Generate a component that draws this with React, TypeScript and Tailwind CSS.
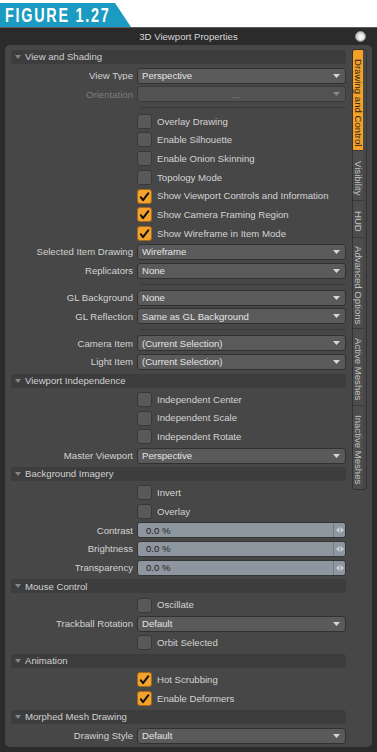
import type { ReactNode } from "react";

const Arrow = ({ dim }: { dim?: boolean }) => (
  <svg width="7" height="4" viewBox="0 0 7 4" className="shrink-0">
    <path d="M0 0 L7 0 L3.5 4 Z" fill={dim ? "#8a8a8a" : "#d8d8d8"} />
  </svg>
);

const Row = ({ label, dim, children }: { label?: string; dim?: boolean; children?: ReactNode }) => (
  <div className="flex h-[18.7px] items-center">
    <div className={`w-[122px] shrink-0 truncate text-right ${dim ? "text-[#7d7d7d]" : "text-[#d3d3d3]"}`}>{label}</div>
    <div className="ml-[4px] flex flex-1 items-center">{children}</div>
  </div>
);

const Dropdown = ({ value }: { value: string }) => (
  <div className="flex h-[16px] w-full items-center justify-between rounded-[3px] border border-[#313131] bg-[#5a5a5a] pl-[4px] pr-[5px] text-[#e4e4e4]">
    <span>{value}</span>
    <Arrow />
  </div>
);

const Check = ({ label, on }: { label: string; on?: boolean }) => (
  <Row>
    <div
      className={`flex h-[15px] w-[15px] items-center justify-center rounded-[3px] border ${
        on ? "border-[#a8681a] bg-[#f3a22c]" : "border-[#383838] bg-[#595959]"
      }`}
    >
      {on && (
        <svg width="11" height="11" viewBox="0 0 11 11">
          <path d="M1.8 6.2 L4 9.2 L9.4 2.2" fill="none" stroke="#111" strokeWidth="2" strokeLinecap="round" strokeLinejoin="round" />
        </svg>
      )}
    </div>
    <span className="ml-[5px] text-[#d3d3d3]">{label}</span>
  </Row>
);

const Slider = ({ label }: { label: string }) => (
  <Row label={label}>
    <div className="flex h-[16px] w-full items-center rounded-[3px] border border-[#343434] bg-[#8e979f] text-[#1d1d1d]">
      <span className="flex-1 pl-[8px]">0.0 %</span>
      <div className="flex h-full w-[12px] items-center justify-center border-l border-[#737b82]">
        <svg width="8" height="6" viewBox="0 0 8 6">
          <path d="M3.4 0 L0 3 L3.4 6 Z M4.6 0 L8 3 L4.6 6 Z" fill="#c9d0d6" />
        </svg>
      </div>
    </div>
  </Row>
);

const Header = ({ title }: { title: string }) => (
  <div className="flex h-[18.7px] items-center">
    <div className="flex h-[14px] w-full items-center rounded-[3px] bg-[#3d3d3d] pl-[4px] text-[#d0d0d0]">
      <svg width="6" height="4" viewBox="0 0 6 4">
        <path d="M0 0 L6 0 L3 4 Z" fill="#858585" />
      </svg>
      <span className="ml-[4px]">{title}</span>
    </div>
  </div>
);

const Sep = () => (
  <div className="flex h-[8.3px] items-center pl-[129px]">
    <div className="h-px w-full bg-[#3a3a3a]" />
  </div>
);

const tabs = [
  { name: "Drawing and Control", h: "h-[100px]", active: true },
  { name: "Visibility", h: "h-[50px]" },
  { name: "HUD", h: "h-[37px]" },
  { name: "Advanced Options", h: "h-[91px]" },
  { name: "Active Meshes", h: "h-[77px]" },
  { name: "Inactive Meshes", h: "h-[84px]" },
];

export default function App() {
  return (
    <div className="h-[752px] w-[377px] overflow-hidden bg-white font-['Liberation_Sans',Arial,sans-serif] text-[9.6px] leading-none">
      <div className="h-[27px] pt-[3px]">
        <div className="flex h-[24px] w-[131px] items-center bg-[#1b9bc1] pl-[5px] [clip-path:polygon(0_0,115px_0,131px_100%,0_100%)]">
          <span className="origin-left scale-x-[0.72] whitespace-nowrap text-[20px] font-bold tracking-[0.12em] text-white">
            FIGURE 1.27
          </span>
        </div>
      </div>

      <div className="flex h-[725px] flex-col border-t border-[#5c5c5c] bg-[#2b2b2b]">
        <div className="relative flex h-[17px] items-center justify-center text-[#d6d6d6]">
          3D Viewport Properties
          <div className="absolute right-[11px] top-[3px] flex h-[11px] w-[11px] items-center justify-center rounded-full border border-[#8d8d8d] bg-[#cfcfcf]">
            <div className="h-[6px] w-[6px] rounded-full bg-[#f2f2f2]" />
          </div>
        </div>

        <div className="mx-[5px] flex h-[702px] rounded-[5px] bg-[#474747]">
          <div className="flex-1 pl-[6px] pt-[2.6px]">
            <Header title="View and Shading" />
            <Row label="View Type">
              <Dropdown value="Perspective" />
            </Row>
            <Row label="Orientation" dim>
              <div className="flex h-[16px] w-full items-center rounded-[3px] border border-[#3b3b3b] bg-[#525252] pr-[5px] text-[#8a8a8a]">
                <span className="flex-1 text-center">...</span>
                <Arrow dim />
              </div>
            </Row>
            <Sep />
            <Check label="Overlay Drawing" />
            <Check label="Enable Silhouette" />
            <Check label="Enable Onion Skinning" />
            <Check label="Topology Mode" />
            <Check label="Show Viewport Controls and Information" on />
            <Check label="Show Camera Framing Region" on />
            <Check label="Show Wireframe in Item Mode" on />
            <Row label="Selected Item Drawing">
              <Dropdown value="Wireframe" />
            </Row>
            <Row label="Replicators">
              <Dropdown value="None" />
            </Row>
            <Sep />
            <Row label="GL Background">
              <Dropdown value="None" />
            </Row>
            <Row label="GL Reflection">
              <Dropdown value="Same as GL Background" />
            </Row>
            <Sep />
            <Row label="Camera Item">
              <Dropdown value="(Current Selection)" />
            </Row>
            <Row label="Light Item">
              <Dropdown value="(Current Selection)" />
            </Row>

            <Header title="Viewport Independence" />
            <Check label="Independent Center" />
            <Check label="Independent Scale" />
            <Check label="Independent Rotate" />
            <Row label="Master Viewport">
              <Dropdown value="Perspective" />
            </Row>

            <Header title="Background Imagery" />
            <Check label="Invert" />
            <Check label="Overlay" />
            <Slider label="Contrast" />
            <Slider label="Brightness" />
            <Slider label="Transparency" />

            <Header title="Mouse Control" />
            <Check label="Oscillate" />
            <Row label="Trackball Rotation">
              <Dropdown value="Default" />
            </Row>
            <Check label="Orbit Selected" />

            <Header title="Animation" />
            <Check label="Hot Scrubbing" on />
            <Check label="Enable Deformers" on />

            <Header title="Morphed Mesh Drawing" />
            <Row label="Drawing Style">
              <Dropdown value="Default" />
            </Row>
          </div>

          <div className="ml-[6px] mr-[5px] w-[15px] pt-[4px]">
            <div className="overflow-hidden rounded-[3px] border border-[#333]">
              {tabs.map((t, i) => (
                <div
                  key={t.name}
                  className={`flex ${t.h} justify-center pt-[5px] [writing-mode:vertical-rl] ${
                    i > 0 ? "border-t border-[#383838]" : ""
                  } ${t.active ? "bg-[#f4a125] text-[#1e1e1e]" : "bg-[#4d4d4d] text-[#c2c2c2]"}`}
                >
                  <span className="whitespace-nowrap">{t.name}</span>
                </div>
              ))}
            </div>
          </div>
        </div>
      </div>
    </div>
  );
}
